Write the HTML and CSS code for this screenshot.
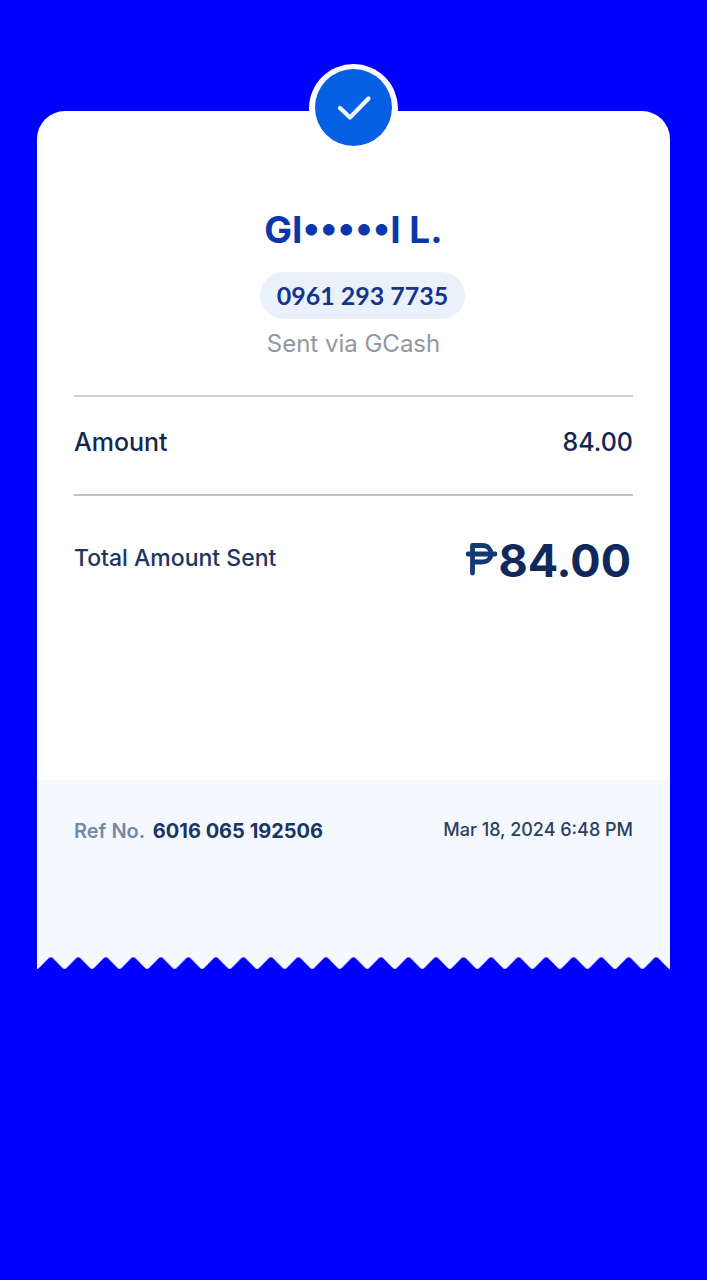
FILE: index.html
```html
<!DOCTYPE html>
<html lang="en">
<head>
<meta charset="utf-8">
<meta name="viewport" content="width=device-width, initial-scale=1">
<title>Receipt</title>
<link rel="stylesheet" href="styles.css">
</head>
<body>
<main class="receipt">
  <svg class="badge" viewBox="0 0 90 90" aria-hidden="true">
    <circle cx="44.500" cy="44.500" r="44.500" fill="#fff"/>
    <circle cx="44.500" cy="43.500" r="38.500" fill="#0560e4"/>
    <path d="M31 44L41 53.500L59.500 34.500" fill="none" stroke="#f2fbff" stroke-width="4.200" stroke-linecap="round" stroke-linejoin="round"/>
  </svg>
  <section class="details">
    <header class="recipient">
      <h1 class="name">GI•••••I L.</h1>
      <p class="phone">0961 293 7735</p>
      <p class="via">Sent via GCash</p>
    </header>
    <dl class="amounts">
      <div class="row">
        <dt class="label">Amount</dt>
        <dd class="value">84.00</dd>
      </div>
      <div class="row row-total">
        <dt class="total-label">Total Amount Sent</dt>
        <dd class="total"><svg class="peso" viewBox="0 0 32 34" role="img" aria-label="Philippine peso"><path d="M6.500 30V2.500H16C28 2.500 28 19 16 19H7M2 11H29" fill="none" stroke="#123a74" stroke-width="4.800" stroke-linecap="round" stroke-linejoin="round"/></svg><span>84.00</span></dd>
      </div>
    </dl>
  </section>
  <footer class="reference">
    <p class="ref">Ref No. <strong class="ref-number">6016 065 192506</strong></p>
    <time class="date" datetime="2024-03-18T18:48">Mar 18, 2024 6:48 PM</time>
  </footer>
  <svg class="torn-edge" viewBox="0 0 644 12" preserveAspectRatio="none" aria-hidden="true">
    <defs>
      <pattern id="tooth" width="28" height="12" patternUnits="userSpaceOnUse">
        <path d="M0 0H28V12Q26.500 12 25 10L16.500 1.400Q14 -.8 11.500 1.400L3 10Q1.500 12 0 12Z" fill="#f5f9ff"/>
      </pattern>
    </defs>
    <rect width="644" height="12" fill="url(#tooth)"/>
  </svg>
</main>
</body>
</html>
```
FILE: styles.css
```css
* {
  box-sizing: border-box;
}

body {
  margin: 0;
  min-height: 100vh;
  background: #0000ff;
  color: #14284f;
  font-family: Inter, "Open Sans", sans-serif;
}

h1, p, dl, dd {
  margin: 0;
}

.receipt {
  position: relative;
  margin: 0 37px;
  padding-top: 111px;
}

.badge {
  position: absolute;
  top: 64px;
  left: 50%;
  width: 90px;
  height: 90px;
  transform: translateX(-50%);
}

.details {
  min-height: 669px;
  padding: 96px 37px 0;
  border-radius: 28px 28px 0 0;
  background: #fefefe;
}

.recipient {
  display: flex;
  flex-direction: column;
  align-items: center;
  padding-bottom: 34px;
}

.name {
  color: #0a37ab;
  font-size: 37px;
  font-weight: 700;
  line-height: 46px;
}

.phone {
  margin: 19px 0 0 18px;
  padding: 0 17px;
  border-radius: 24px;
  background: #ebf1fb;
  color: #16358a;
  font-family: Lato, Inter, sans-serif;
  font-size: 25px;
  font-weight: 700;
  line-height: 47px;
}

.via {
  margin-top: 8px;
  color: #94989f;
  font-size: 24px;
  line-height: 34px;
}

.row {
  display: flex;
  align-items: center;
  justify-content: space-between;
  height: 99px;
  padding-bottom: 8px;
  border-top: 2px solid #cdd1d7;
}

.row-total {
  height: 132px;
  padding: 0 2px 2px 0;
  border-color: #bcc3d0;
}

.label,
.value {
  font-size: 25px;
  font-weight: 500;
}

.total-label {
  padding-bottom: 4px;
  color: #1d3560;
  font-size: 23px;
  font-weight: 500;
}

.total {
  display: flex;
  align-items: center;
  color: #10295a;
  font-size: 45px;
  font-weight: 700;
}

.peso {
  width: 32px;
  height: 34px;
}

.reference {
  display: flex;
  align-items: flex-start;
  justify-content: space-between;
  min-height: 177px;
  padding: 38px 37px 0;
  background: #f5f9ff;
}

.ref {
  color: #7488aa;
  font-size: 20px;
  font-weight: 600;
  line-height: 26px;
}

.ref-number {
  margin-left: 3px;
  color: #1b365f;
  font-weight: 700;
}

.date {
  color: #2a405f;
  font-size: 18px;
  font-weight: 500;
  line-height: 24px;
}

.torn-edge {
  display: block;
  width: 100%;
  height: 12px;
}
```
